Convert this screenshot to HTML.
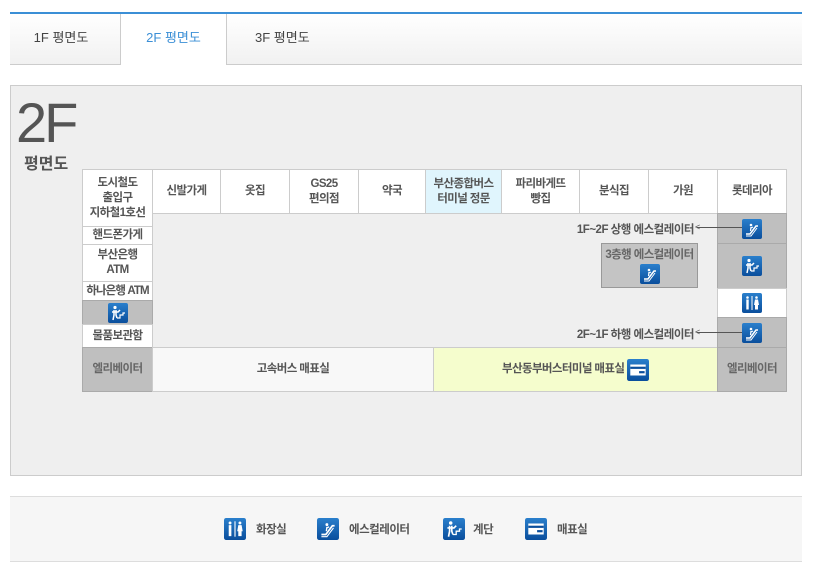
<!DOCTYPE html>
<html><head><meta charset="utf-8"><style>
*{margin:0;padding:0;box-sizing:border-box}
body{width:822px;height:573px;background:#fff;font-family:"Liberation Sans","Noto Sans CJK KR",sans-serif;position:relative;overflow:hidden;color:#555}
.a{position:absolute}
.tab{position:absolute;top:14px;height:51px;font-size:13px;color:#444;text-align:center;line-height:48px;background:linear-gradient(#fff,#f1f1f1);border-bottom:1px solid #ccc}
.c{position:absolute;display:flex;align-items:center;justify-content:center;text-align:center;font-size:11.5px;font-weight:bold;color:#555;line-height:15px;border:1px solid #ccc;background:#fff;letter-spacing:-0.6px;white-space:nowrap}
.g{background:#bfbfbf;border-color:#aaa}
.ic{width:20px;height:20px;display:inline-block;vertical-align:middle}
.lbl{position:absolute;font-size:11.5px;font-weight:bold;color:#555;white-space:nowrap;letter-spacing:-0.5px}
</style></head><body>
<svg width="0" height="0" style="position:absolute">
<defs>
<linearGradient id="bg" x1="0" y1="0" x2="0" y2="1"><stop offset="0" stop-color="#2a7fcc"/><stop offset="1" stop-color="#0a4e9c"/></linearGradient>
<symbol id="esc" viewBox="0 0 20 20"><rect x="0" y="0" width="20" height="20" rx="2" fill="url(#bg)"/><path d="M4 15 L8 15 L14 7 L16 7" stroke="#fff" stroke-width="1.6" fill="none"/><path d="M4 17 L9 17 L15 9" stroke="#fff" stroke-width="1" fill="none"/><circle cx="9" cy="6" r="1.3" fill="#fff"/><path d="M9 8 L8.5 12 M9 9 L11 8" stroke="#fff" stroke-width="1.2"/></symbol>
<symbol id="stair" viewBox="0 0 20 20"><rect x="0" y="0" width="20" height="20" rx="2" fill="url(#bg)"/><circle cx="7" cy="4.5" r="1.6" fill="#fff"/><path d="M6 7 L6 12 L5 17 M8 7 L8 12 L9 15 M4 9 L10 9 L12 7" stroke="#fff" stroke-width="1.5" fill="none"/><path d="M9 15 L12 15 L12 12 L15 12 L15 10 L17 10" stroke="#fff" stroke-width="1.2" fill="none"/></symbol>
<symbol id="wc" viewBox="0 0 20 20"><rect x="0" y="0" width="20" height="20" rx="2" fill="url(#bg)"/><circle cx="5.5" cy="4.5" r="1.3" fill="#fff"/><rect x="4.3" y="6.5" width="2.4" height="10" fill="#fff"/><rect x="9.5" y="3" width="1" height="14" fill="#fff"/><circle cx="14.5" cy="4.5" r="1.3" fill="#fff"/><path d="M13 6.5 L16 6.5 L17 12 L16 12 L16 16.5 L13 16.5 L13 12 L12 12 Z" fill="#fff"/></symbol>
<symbol id="tk" viewBox="0 0 20 20"><rect x="0" y="0" width="20" height="20" rx="2" fill="url(#bg)"/><rect x="3" y="5" width="14" height="10" fill="#fff"/><rect x="3" y="7" width="14" height="2" fill="#0a4e9c"/><rect x="11" y="11" width="5" height="2" fill="#0a4e9c"/></symbol>
</defs></svg>

<div class="a" style="left:10px;top:12px;width:792px;height:2px;background:#3b8fd6"></div>
<div class="tab" style="left:10px;width:110px;padding-right:8px">1F 평면도</div>
<div class="tab" style="left:120px;width:107px;background:#fff;border-bottom:none;border-left:1px solid #ccc;border-right:1px solid #ccc;color:#3b8fd6">2F 평면도</div>
<div class="tab" style="left:227px;width:575px;text-align:left;padding-left:28px">3F 평면도</div>

<div class="a" style="left:10px;top:85px;width:792px;height:391px;background:#efefef;border:1px solid #ccc"></div>
<div class="a" style="left:16px;top:94px;font-size:56px;line-height:58px;color:#555;letter-spacing:-3px">2F</div>
<div class="a" style="left:24px;top:150px;font-size:16px;font-weight:bold;color:#555">평면도</div>

<!-- header row -->
<div class="c" style="left:82px;top:169px;width:71px;height:58px;align-items:flex-start;padding-top:6px">도시철도<br>출입구<br>지하철1호선</div>
<div class="c" style="left:152px;top:169px;width:69px;height:45px">신발가게</div>
<div class="c" style="left:220px;top:169px;width:70px;height:45px">옷집</div>
<div class="c" style="left:289px;top:169px;width:70px;height:45px">GS25<br>편의점</div>
<div class="c" style="left:358px;top:169px;width:68px;height:45px">약국</div>
<div class="c" style="left:425px;top:169px;width:77px;height:45px;background:#e0f5fd">부산종합버스<br>터미널 정문</div>
<div class="c" style="left:501px;top:169px;width:79px;height:45px">파리바게뜨<br>빵집</div>
<div class="c" style="left:579px;top:169px;width:70px;height:45px">분식집</div>
<div class="c" style="left:648px;top:169px;width:70px;height:45px">가원</div>
<div class="c" style="left:717px;top:169px;width:70px;height:45px">롯데리아</div>

<!-- left column -->
<div class="c" style="left:82px;top:226px;width:71px;height:19px">핸드폰가게</div>
<div class="c" style="left:82px;top:244px;width:71px;height:38px">부산은행<br>ATM</div>
<div class="c" style="left:82px;top:281px;width:71px;height:20px;letter-spacing:-0.9px">하나은행 ATM</div>
<div class="c g" style="left:82px;top:300px;width:71px;height:25px"><svg class="ic"><use href="#stair"/></svg></div>
<div class="c" style="left:82px;top:324px;width:71px;height:24px">물품보관함</div>
<div class="c g" style="left:82px;top:347px;width:71px;height:45px;color:#666">엘리베이터</div>

<!-- bottom row -->
<div class="c" style="left:152px;top:347px;width:282px;height:45px;background:#f8f8f8">고속버스 매표실</div>
<div class="c" style="left:433px;top:347px;width:285px;height:45px;background:#f5fdcd">부산동부버스터미널 매표실&nbsp;<svg class="ic" style="width:22px;height:22px"><use href="#tk"/></svg></div>

<!-- right column -->
<div class="c g" style="left:717px;top:213px;width:70px;height:31px"><svg class="ic"><use href="#esc"/></svg></div>
<div class="c g" style="left:717px;top:243px;width:70px;height:46px"><svg class="ic"><use href="#stair"/></svg></div>
<div class="c" style="left:717px;top:288px;width:70px;height:30px"><svg class="ic"><use href="#wc"/></svg></div>
<div class="c g" style="left:717px;top:317px;width:70px;height:31px"><svg class="ic"><use href="#esc"/></svg></div>
<div class="c g" style="left:717px;top:347px;width:70px;height:45px;color:#666">엘리베이터</div>

<div class="lbl" style="right:128px;top:221px">1F~2F 상행 에스컬레이터</div>
<div class="a" style="left:697px;top:227px;width:45px;height:1px;background:#555"></div>
<div class="lbl" style="left:695px;top:222px;font-size:9px;font-weight:normal">&lt;</div>
<div class="lbl" style="right:128px;top:326px">2F~1F 하행 에스컬레이터</div>
<div class="a" style="left:697px;top:332px;width:45px;height:1px;background:#555"></div>
<div class="lbl" style="left:695px;top:327px;font-size:9px;font-weight:normal">&lt;</div>

<div class="a" style="left:601px;top:243px;width:97px;height:45px;background:#c4c4c4;border:1px solid #999;text-align:center;font-size:11.5px;font-weight:bold;color:#666;padding-top:4px;white-space:nowrap;letter-spacing:-0.6px;line-height:14px">3층행 에스컬레이터<br><svg class="ic" style="margin-top:2px"><use href="#esc"/></svg></div>

<!-- legend -->
<div class="a" style="left:10px;top:496px;width:792px;height:66px;background:#f6f6f6;border-top:1px solid #ddd;border-bottom:1px solid #ddd"></div>
<svg class="ic a" style="left:224px;top:518px;width:22px;height:22px"><use href="#wc"/></svg>
<div class="lbl" style="left:256px;top:521px">화장실</div>
<svg class="ic a" style="left:317px;top:518px;width:22px;height:22px"><use href="#esc"/></svg>
<div class="lbl" style="left:349px;top:521px">에스컬레이터</div>
<svg class="ic a" style="left:443px;top:518px;width:22px;height:22px"><use href="#stair"/></svg>
<div class="lbl" style="left:473px;top:521px">계단</div>
<svg class="ic a" style="left:525px;top:518px;width:22px;height:22px"><use href="#tk"/></svg>
<div class="lbl" style="left:557px;top:521px">매표실</div>
</body></html>
